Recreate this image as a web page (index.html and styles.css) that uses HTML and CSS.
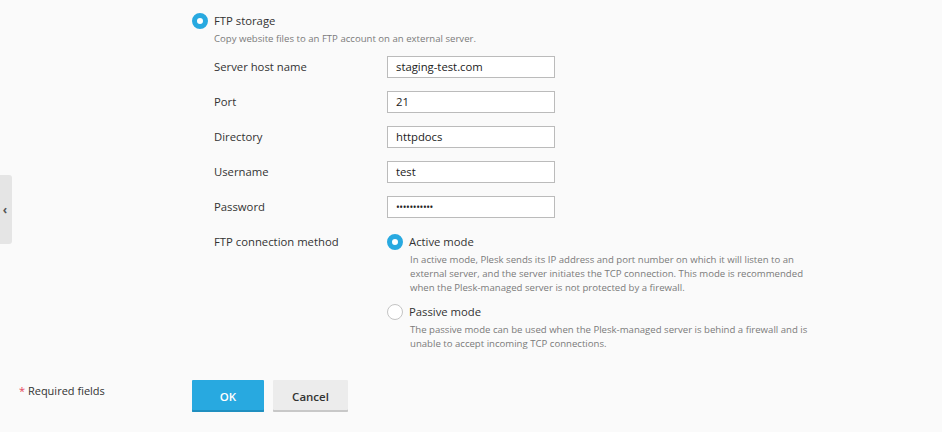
FILE: index.html
```html
<!DOCTYPE html>
<html>
<head>
<meta charset="utf-8">
<link rel="stylesheet" href="styles.css">
</head>
<body>
<div class="side-tab"><span class="side-arrow">‹</span></div>
<div class="page">
  <div class="section">
    <div class="option">
      <span class="radio checked"></span>
      <span class="option-title">FTP storage</span>
    </div>
    <div class="hint top-hint">Copy website files to an FTP account on an external server.</div>

    <div class="form">
      <div class="row">
        <div class="label">Server host name</div>
        <div class="field"><div class="input">staging-test.com</div></div>
      </div>
      <div class="row">
        <div class="label">Port</div>
        <div class="field"><div class="input">21</div></div>
      </div>
      <div class="row">
        <div class="label">Directory</div>
        <div class="field"><div class="input">httpdocs</div></div>
      </div>
      <div class="row">
        <div class="label">Username</div>
        <div class="field"><div class="input">test</div></div>
      </div>
      <div class="row">
        <div class="label">Password</div>
        <div class="field"><div class="input password">•••••••••••</div></div>
      </div>
      <div class="row method">
        <div class="label">FTP connection method</div>
        <div class="field">
          <div class="option">
            <span class="radio checked"></span>
            <span class="option-title">Active mode</span>
          </div>
          <div class="hint mode-hint">In active mode, Plesk sends its IP address and port number on which it will listen to an external server, and the server initiates the TCP connection. This mode is recommended when the Plesk-managed server is not protected by a firewall.</div>
          <div class="option passive">
            <span class="radio"></span>
            <span class="option-title">Passive mode</span>
          </div>
          <div class="hint mode-hint">The passive mode can be used when the Plesk-managed server is behind a firewall and is unable to accept incoming TCP connections.</div>
        </div>
      </div>
    </div>
  </div>

  <div class="footer">
    <div class="required"><span class="star">*</span> Required fields</div>
    <div class="buttons">
      <button class="btn btn-primary">OK</button>
      <button class="btn btn-default">Cancel</button>
    </div>
  </div>
</div>
</body>
</html>
```

FILE: styles.css
```css
html, body {
  margin: 0;
  padding: 0;
}
body {
  background: #fafafa;
  font-family: "Open Sans", "DejaVu Sans", sans-serif;
  color: #333;
  width: 942px;
  height: 432px;
  overflow: hidden;
  position: relative;
}
.side-tab {
  position: absolute;
  left: 0;
  top: 175px;
  width: 12px;
  height: 69px;
  background: #e5e5e5;
  border-radius: 0 3px 3px 0;
  display: flex;
  align-items: center;
  justify-content: center;
}
.side-arrow {
  font-size: 12px;
  line-height: 12px;
  color: #555;
  font-weight: 700;
  margin-left: -2px;
}
.page {
  padding-top: 13px;
}
.section {
  padding-left: 192px;
}
.option {
  display: flex;
  align-items: center;
  height: 16px;
}
.radio {
  box-sizing: border-box;
  width: 16px;
  height: 16px;
  border-radius: 50%;
  border: 1px solid #c4c4c4;
  background: #fff;
  flex: none;
  position: relative;
}
.radio.checked {
  border: 5px solid #28a9e0;
  background: #fff;
}
.option-title {
  margin-left: 6px;
  font-size: 11.3px;
  line-height: 16px;
  color: #333;
}
.hint {
  font-size: 9.6px;
  line-height: 14px;
  color: #7a7a7a;
}
.top-hint {
  margin-left: 22px;
  margin-top: 3px;
}
.form {
  margin-left: 22px;
  margin-top: 10px;
}
.row {
  display: flex;
  margin-bottom: 13px;
}
.label {
  width: 173px;
  flex: none;
  font-size: 11.3px;
  line-height: 22px;
  color: #333;
}
.field {
  flex: none;
}
.input {
  box-sizing: border-box;
  width: 168px;
  height: 22px;
  border: 1px solid #bbb;
  background: #fff;
  font-size: 11.3px;
  line-height: 20px;
  padding: 0 8px;
  color: #222;
}
.input.password {
  font-size: 10px;
  letter-spacing: -0.4px;
}
.method {
  padding-top: 3px;
}
.method .label {
  line-height: 16px;
}
.mode-hint {
  margin-left: 23px;
  margin-top: 3px;
  width: 400px;
}
.passive {
  margin-top: 9px;
}
.footer {
  display: flex;
  margin-top: 29px;
}
.required {
  width: 192px;
  box-sizing: border-box;
  padding-left: 19px;
  padding-top: 1px;
  font-size: 11px;
  line-height: 20px;
  color: #333;
}
.star {
  color: #e5455c;
}
.buttons {
  display: flex;
  gap: 9px;
}
.btn {
  font-family: "Open Sans", "DejaVu Sans", sans-serif;
  font-size: 11.5px;
  font-weight: 600;
  height: 32px;
  border: none;
  border-radius: 1px;
  padding: 0;
  cursor: pointer;
}
.btn-primary {
  width: 72px;
  background: #28a9e0;
  color: #fff;
  box-shadow: inset 0 -2px 0 #1f8fc0;
}
.btn-default {
  width: 75px;
  background: #ececec;
  color: #333;
  box-shadow: inset 0 -2px 0 #c8c8c8;
}
```
